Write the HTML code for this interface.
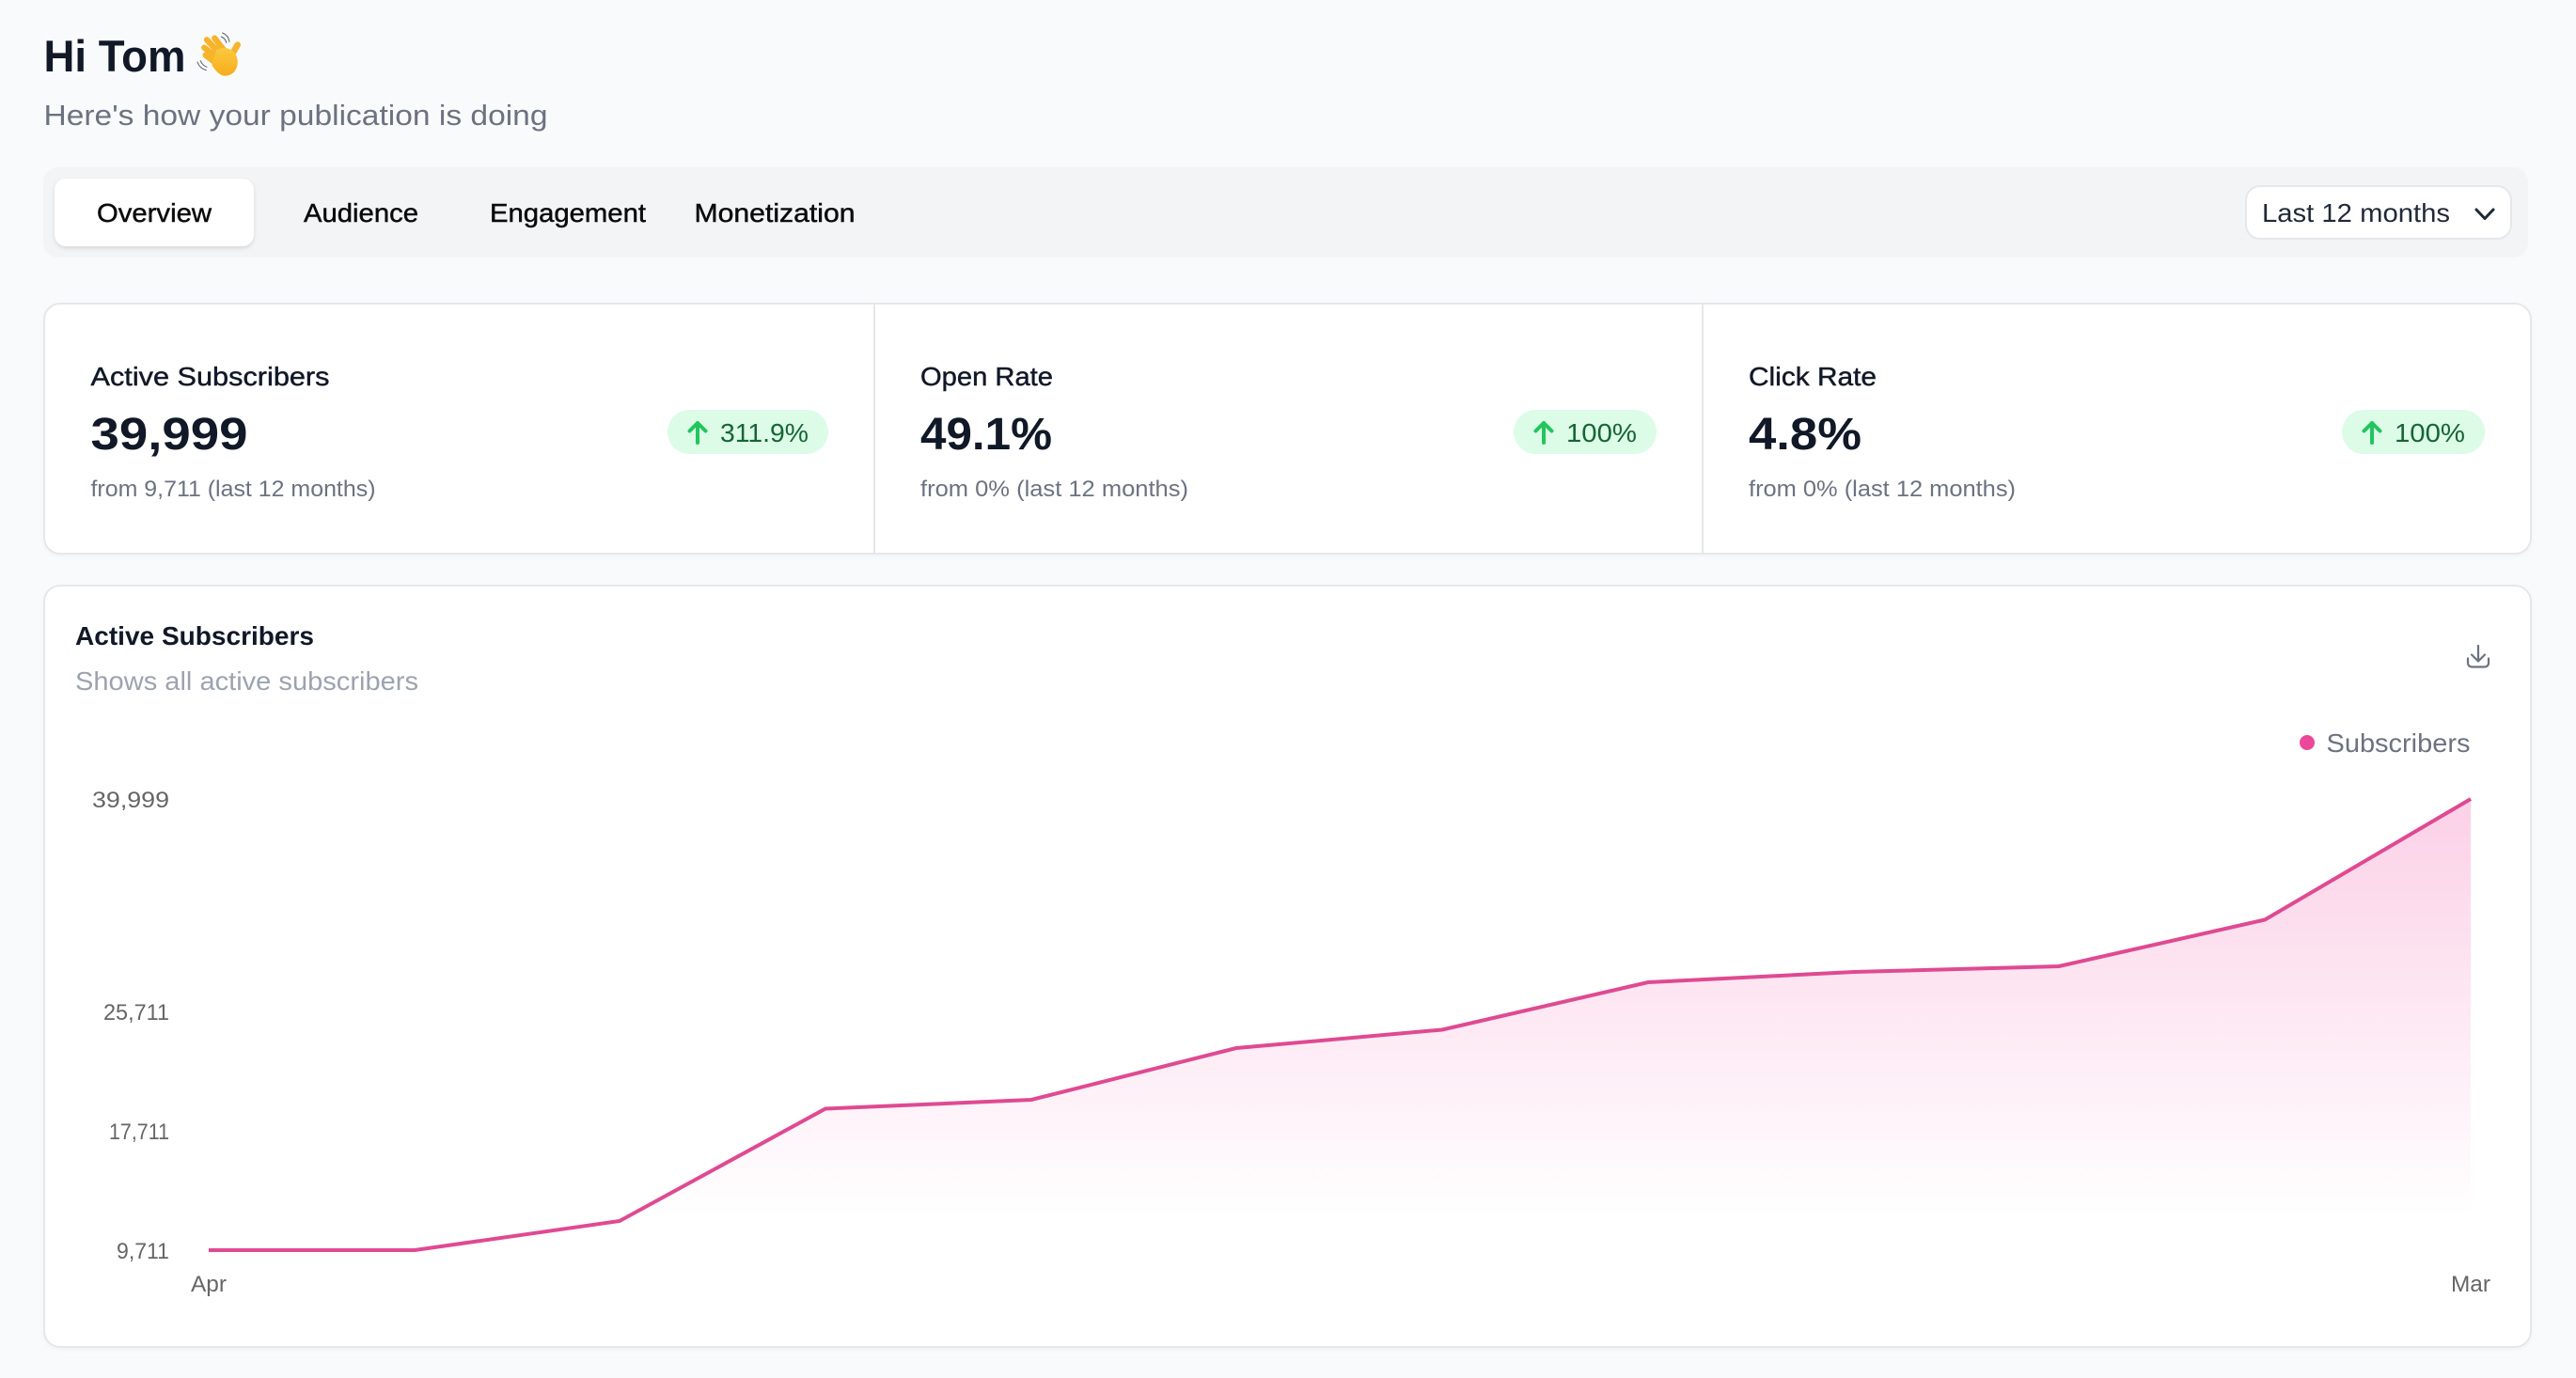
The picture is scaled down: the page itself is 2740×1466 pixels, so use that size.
<!DOCTYPE html>
<html lang="en">
<head>
<meta charset="utf-8">
<title>Hi Tom</title>
<style>
html,body{margin:0;padding:0;width:2740px;height:1466px;overflow:hidden;background:#f9fafb}
.b{position:absolute;box-sizing:border-box}
.card{background:#fff;border:2px solid #e5e7eb;border-radius:18px;box-shadow:0 2px 4px rgba(0,0,0,.03)}
svg{position:absolute;left:0;top:0}
text{font-family:"Liberation Sans",Arial,sans-serif;white-space:pre}
.m{stroke-width:.45;stroke:currentColor;paint-order:stroke}
</style>
</head>
<body>
<div class="b" style="left:46px;top:178px;width:2643px;height:96px;background:#f3f4f6;border-radius:16px"></div>
<div class="b" style="left:58px;top:190px;width:212px;height:72px;background:#fff;border-radius:12px;box-shadow:0 2px 5px rgba(0,0,0,.12)"></div>
<div class="b" style="left:2388px;top:197px;width:284px;height:58px;background:#fff;border:2px solid #e5e7eb;border-radius:16px"></div>
<div class="b card" style="left:46px;top:322px;width:2647px;height:268px"></div>
<div class="b" style="left:929px;top:324px;width:2px;height:264px;background:#e5e7eb"></div>
<div class="b" style="left:1810px;top:324px;width:2px;height:264px;background:#e5e7eb"></div>
<div class="b" style="left:710px;top:436px;width:171px;height:47px;background:#dcfce7;border-radius:24px"></div>
<div class="b" style="left:1610px;top:436px;width:152px;height:47px;background:#dcfce7;border-radius:24px"></div>
<div class="b" style="left:2491px;top:436px;width:152px;height:47px;background:#dcfce7;border-radius:24px"></div>
<div class="b card" style="left:46px;top:622px;width:2647px;height:812px"></div>

<svg width="2740" height="1466" viewBox="0 0 2740 1466" xmlns="http://www.w3.org/2000/svg">
<defs>
<linearGradient id="area" gradientUnits="userSpaceOnUse" x1="0" y1="850" x2="0" y2="1295">
<stop offset="0" stop-color="#f472b6" stop-opacity=".33"/>
<stop offset="1" stop-color="#f472b6" stop-opacity="0"/>
</linearGradient>
<linearGradient id="hand" x1="0" y1="0" x2="0" y2="1">
<stop offset="0" stop-color="#fdc93f"/>
<stop offset="1" stop-color="#f6ac1c"/>
</linearGradient>
</defs>

<!-- heading -->
<text x="46.500" y="76" font-size="47" font-weight="700" fill="#111827" textLength="151" lengthAdjust="spacingAndGlyphs">Hi Tom</text>
<g transform="translate(180,10) scale(.3333)">
<g fill="none" stroke="#f6b42a" stroke-width="19" stroke-linecap="round">
<path d="M145 92 L182 140"/>
<path d="M120 97 L165 145"/>
<path d="M112 122 L160 160"/>
<path d="M116 146 L155 176"/>
<path d="M197 150 L218 113" stroke-width="20"/>
</g>
<path d="M150 130 C175 115 205 125 215 150 C226 180 208 213 178 212 C160 211 148 195 136 178 Z" fill="url(#hand)"/>
<g fill="none" stroke="#5b5f66" stroke-width="3" stroke-linecap="round">
<path d="M170 75 C182 80 190 90 192 103"/>
<path d="M166 87 C174 90 180 97 182 106"/>
<path d="M90 168 C94 180 104 190 118 194"/>
<path d="M100 164 C103 172 110 180 120 184"/>
</g>
</g>
<text x="46.500" y="133" font-size="31" fill="#6b7280" textLength="536" lengthAdjust="spacingAndGlyphs">Here's how your publication is doing</text>

<!-- tabs -->
<g font-size="28" fill="#0a0a0a" color="#0a0a0a">
<text class="m" x="103" y="236" textLength="122" lengthAdjust="spacingAndGlyphs">Overview</text>
<text class="m" x="323" y="236" textLength="122" lengthAdjust="spacingAndGlyphs">Audience</text>
<text class="m" x="521" y="236" textLength="166" lengthAdjust="spacingAndGlyphs">Engagement</text>
<text class="m" x="738.500" y="236" textLength="171" lengthAdjust="spacingAndGlyphs">Monetization</text>
</g>
<text x="2406" y="236" font-size="28" fill="#1f2937" textLength="200" lengthAdjust="spacingAndGlyphs">Last 12 months</text>
<path d="M2634 223 L2643 232.500 L2652 223" fill="none" stroke="#1f2937" stroke-width="3" stroke-linecap="round" stroke-linejoin="round"/>

<!-- stat 1 -->
<text class="m" x="96.500" y="410" font-size="28" fill="#111827" color="#111827" textLength="254" lengthAdjust="spacingAndGlyphs">Active Subscribers</text>
<text x="96.500" y="478" font-size="48" font-weight="700" fill="#111827" textLength="167" lengthAdjust="spacingAndGlyphs">39,999</text>
<text x="96.500" y="528" font-size="24" fill="#6b7280" textLength="303" lengthAdjust="spacingAndGlyphs">from 9,711 (last 12 months)</text>
<path d="M742 471 V450 M733.500 458.500 L742 450 L750.500 458.500" fill="none" stroke="#22c55e" stroke-width="4" stroke-linecap="round" stroke-linejoin="round"/>
<text x="766" y="470" font-size="28" fill="#166534" textLength="94" lengthAdjust="spacingAndGlyphs">311.9%</text>

<!-- stat 2 -->
<text class="m" x="979" y="410" font-size="28" fill="#111827" color="#111827" textLength="141" lengthAdjust="spacingAndGlyphs">Open Rate</text>
<text x="979" y="478" font-size="48" font-weight="700" fill="#111827" textLength="140" lengthAdjust="spacingAndGlyphs">49.1%</text>
<text x="979" y="528" font-size="24" fill="#6b7280" textLength="285" lengthAdjust="spacingAndGlyphs">from 0% (last 12 months)</text>
<path d="M1642 471 V450 M1633.500 458.500 L1642 450 L1650.500 458.500" fill="none" stroke="#22c55e" stroke-width="4" stroke-linecap="round" stroke-linejoin="round"/>
<text x="1666" y="470" font-size="28" fill="#166534" textLength="75" lengthAdjust="spacingAndGlyphs">100%</text>

<!-- stat 3 -->
<text class="m" x="1860" y="410" font-size="28" fill="#111827" color="#111827" textLength="136" lengthAdjust="spacingAndGlyphs">Click Rate</text>
<text x="1860" y="478" font-size="48" font-weight="700" fill="#111827" textLength="120" lengthAdjust="spacingAndGlyphs">4.8%</text>
<text x="1860" y="528" font-size="24" fill="#6b7280" textLength="284" lengthAdjust="spacingAndGlyphs">from 0% (last 12 months)</text>
<path d="M2523 471 V450 M2514.500 458.500 L2523 450 L2531.500 458.500" fill="none" stroke="#22c55e" stroke-width="4" stroke-linecap="round" stroke-linejoin="round"/>
<text x="2547" y="470" font-size="28" fill="#166534" textLength="75" lengthAdjust="spacingAndGlyphs">100%</text>

<!-- chart header -->
<text x="80" y="686" font-size="28" font-weight="700" fill="#111827" textLength="254" lengthAdjust="spacingAndGlyphs">Active Subscribers</text>
<text x="80" y="734" font-size="28" fill="#9ca3af" textLength="365" lengthAdjust="spacingAndGlyphs">Shows all active subscribers</text>
<path d="M2625 700.500 V705.500 A4 4 0 0 0 2629 709.500 H2643 A4 4 0 0 0 2647 705.500 V700.500 M2636 687 V703 M2629 696.500 L2636 703.500 L2643 696.500" fill="none" stroke="#6b7280" stroke-width="2.200" stroke-linecap="round" stroke-linejoin="round"/>
<circle cx="2454" cy="790" r="8" fill="#ec4899"/>
<text x="2474.500" y="800" font-size="28" fill="#6b7280" textLength="153" lengthAdjust="spacingAndGlyphs">Subscribers</text>

<!-- chart -->
<path d="M222 1330 L441 1330 L659 1299 L878 1179.500 L1097 1170 L1315 1115 L1534 1095.500 L1753 1045 L1972 1034 L2190 1028 L2409 978.500 L2628 850 V1330 H222 Z" fill="url(#area)"/>
<path d="M222 1330 L441 1330 L659 1299 L878 1179.500 L1097 1170 L1315 1115 L1534 1095.500 L1753 1045 L1972 1034 L2190 1028 L2409 978.500 L2628 850" fill="none" stroke="#df4a92" stroke-width="4"/>

<g font-size="24" fill="#666666">
<text x="98" y="859" textLength="82" lengthAdjust="spacingAndGlyphs">39,999</text>
<text x="110" y="1085" textLength="70" lengthAdjust="spacingAndGlyphs">25,711</text>
<text x="116" y="1212" textLength="64" lengthAdjust="spacingAndGlyphs">17,711</text>
<text x="124" y="1339" textLength="56" lengthAdjust="spacingAndGlyphs">9,711</text>
<text x="203" y="1374" textLength="38" lengthAdjust="spacingAndGlyphs">Apr</text>
<text x="2607" y="1374" textLength="42" lengthAdjust="spacingAndGlyphs">Mar</text>
</g>
</svg>
</body>
</html>
